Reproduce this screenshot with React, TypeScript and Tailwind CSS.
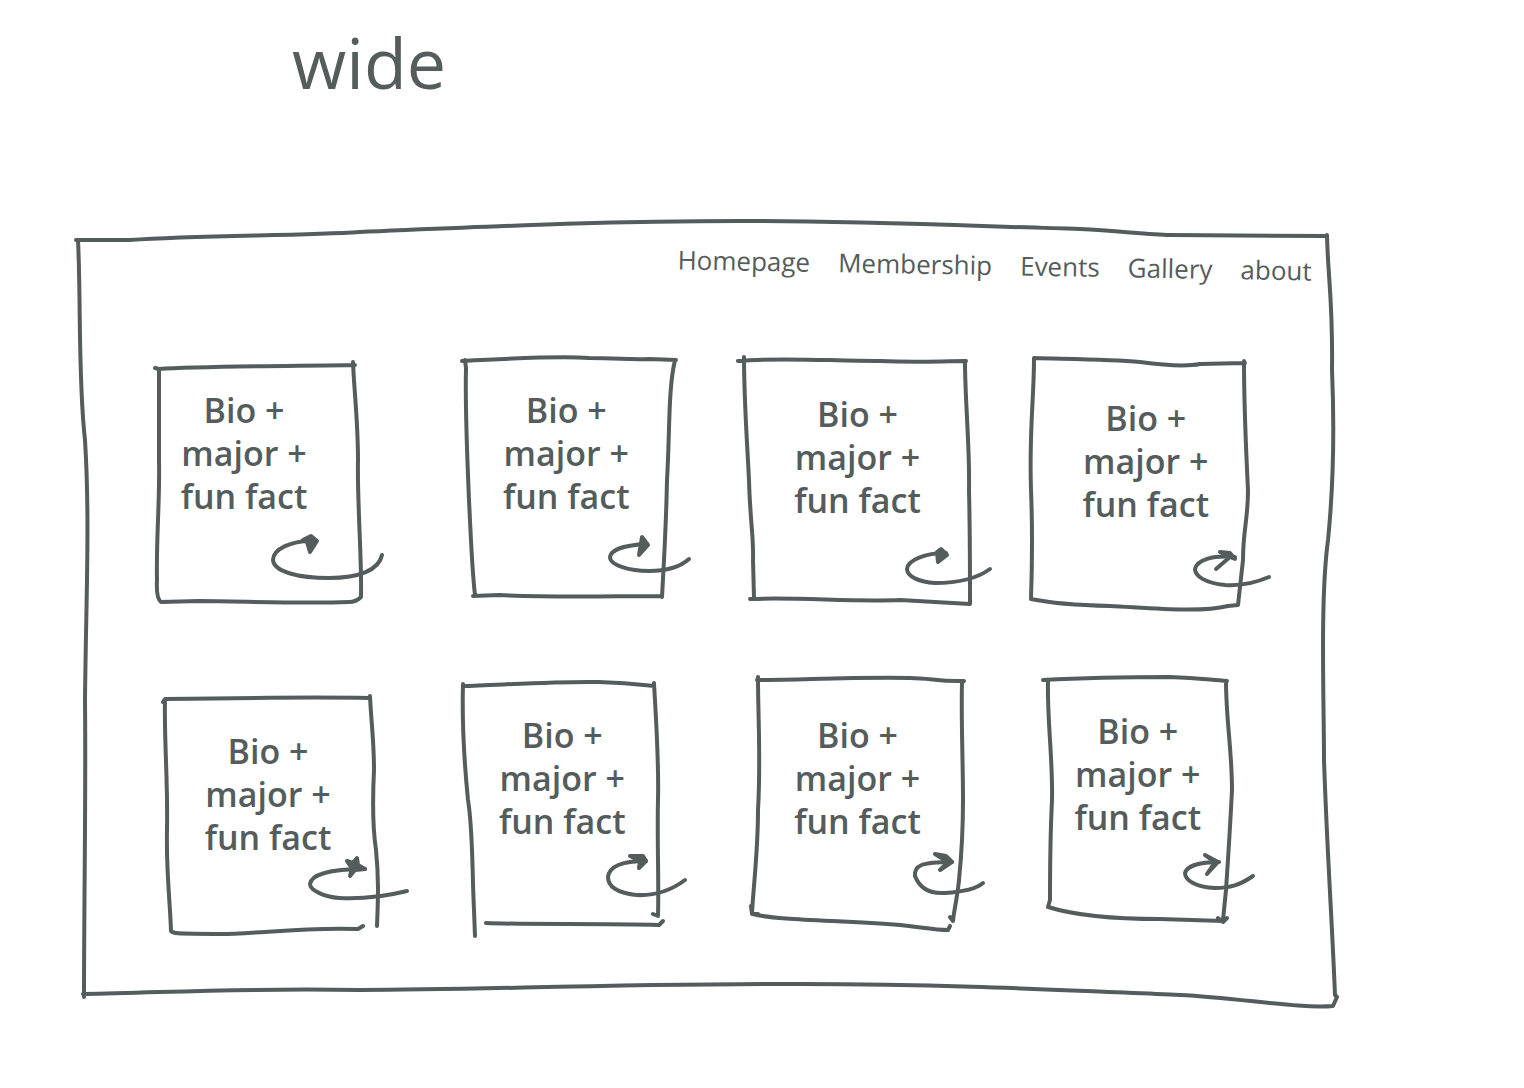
type Member = {
  name: string;
  pad: string;
  view: string;
  outline: string;
  arrow: string;
  head: string;
};

const links = ['Homepage', 'Membership', 'Events', 'Gallery', 'about'];

const members: Member[] = [
  {
    name: 'Member 1',
    pad: 'pl-4 pt-8',
    view: '157 357 240 260',
    outline:
      'M156 368L160 369C200 366 300 366 356 365M354 362C355 390 359 420 359 460C358 500 363 560 362 597Q357 602 350 602C300 604 240 601 200 601L162 602Q157 598 158 580C157 540 161 500 160 460L160 369',
    arrow: 'M383 555C380 570 360 578 330 578C300 578 275 572 274 560C274 549 292 541 312 541',
    head: 'M304 540L312 536L318 541L311 552L308 542Z',
  },
  {
    name: 'Member 2',
    pad: 'pl-8 pt-8',
    view: '463 357 240 260',
    outline:
      'M463 361C500 359 560 356 590 358C620 358 630 360 650 359L677 360M676 360C669 390 671 430 668 480C667 530 665 560 663 597M474 596L500 595C560 598 610 596 663 596M466 360L467 368C466 410 468 450 470 500C472 540 473 570 476 595',
    arrow: 'M690 559C680 568 665 571 650 571C630 571 612 565 611 558C611 550 625 545 648 544',
    head: 'M643 537L640 555L649 545Z',
  },
  {
    name: 'Member 3',
    pad: 'pl-12 pt-9',
    view: '738 357 240 260',
    outline:
      'M738 361C780 357 830 361 880 361C920 363 940 361 966 361M965 362C965 400 970 450 969 490C970 530 970 570 970 604M750 599C800 597 850 602 900 600L970 604M744 357C744 400 747 440 749 480C750 520 754 540 753 560L754 598',
    arrow: 'M990 569C975 580 955 583 935 583C920 582 907 577 907 569C908 560 925 553 946 553',
    head: 'M941 549L947 555L938 562L937 552Z',
  },
  {
    name: 'Member 4',
    pad: 'pl-11 pt-10',
    view: '1030 357 240 260',
    outline:
      'M1034 358C1070 359 1110 359 1140 362C1170 366 1190 366 1200 364L1245 363M1244 361C1244 400 1245 430 1248 490C1248 520 1243 530 1243 560L1238 605L1228 606C1200 613 1150 608 1110 606C1070 605 1050 603 1031 599M1034 358C1034 400 1029 430 1031 490C1033 540 1032 570 1031 599',
    arrow: 'M1269 577C1255 583 1240 586 1225 585C1205 583 1195 576 1195 569C1197 560 1212 555 1235 557',
    head: 'M1220 552L1230 553L1235 559L1230 557L1216 569L1230 557Z',
  },
  {
    name: 'Member 5',
    pad: 'pl-10 pt-13',
    view: '157 678 240 260',
    outline:
      'M164 702L166 699C230 698 310 697 371 698M371 696C372 720 375 740 375 770C373 810 374 830 377 850C380 880 379 900 378 926M364 926L359 929C300 927 260 934 220 934C190 933 175 935 172 931C171 900 167 870 168 830C169 780 165 740 166 700',
    arrow: 'M408 891C380 898 360 899 340 898C325 897 311 890 311 884C312 875 330 869 366 869',
    head: 'M348 861L354 863L358 858L359 865L366 869L356 870L351 876L353 868Z',
  },
  {
    name: 'Member 6',
    pad: 'pl-7 pt-9',
    view: '463 678 240 260',
    outline:
      'M464 686C500 685 560 681 600 682C630 683 645 685 655 686M655 683C657 720 660 760 659 800C658 840 660 880 659 916L654 914M487 923C530 925 600 923 660 925L664 921M464 684C463 720 465 760 469 800C474 830 473 870 475 910L476 936',
    arrow: 'M686 880C670 892 655 896 637 895C620 893 609 887 609 877C610 868 620 861 647 861',
    head: 'M631 856L644 856L647 861L640 868L641 861Z',
  },
  {
    name: 'Member 7',
    pad: 'pl-12 pt-9',
    view: '738 678 240 260',
    outline:
      'M757 680C800 680 850 677 910 678C930 678 940 682 964 681M962 683C961 720 963 760 963 800C963 840 961 860 959 880C957 900 954 910 953 921L950 917M751 906L752 914L758 914M753 914C780 921 840 920 900 925C920 927 935 930 948 930L950 926M758 677C758 720 761 760 758 810C758 850 754 880 752 913',
    arrow: 'M983 883C975 890 960 892 945 893C930 894 920 889 915 876C914 866 920 862 952 862',
    head: 'M935 854L946 856L952 862L940 870L948 862Z',
  },
  {
    name: 'Member 8',
    pad: 'pl-9 pt-8',
    view: '1030 678 240 260',
    outline:
      'M1043 680C1080 678 1130 677 1170 677C1200 678 1210 680 1227 681M1226 681C1226 720 1232 750 1232 790C1230 830 1228 860 1226 890L1223 920M1218 918L1223 922L1227 918M1048 907C1080 917 1130 919 1160 919L1223 921M1048 681C1047 720 1053 760 1052 800C1050 840 1050 870 1050 900L1048 907',
    arrow: 'M1253 876C1240 885 1230 888 1215 888C1195 887 1185 880 1185 873C1187 866 1200 862 1219 862',
    head: 'M1205 855L1218 862L1207 874L1215 862Z',
  },
];

function Frame() {
  return (
    <svg
      aria-hidden="true"
      className="pointer-events-none absolute inset-0 h-full w-full overflow-visible"
      viewBox="76 216 1264 796"
      preserveAspectRatio="none"
      fill="none"
      stroke="currentColor"
      strokeWidth="4"
      strokeLinecap="round"
      strokeLinejoin="round"
    >
      <path
        vectorEffect="non-scaling-stroke"
        d="M76 240L130 240C200 235 300 236 360 232C480 227 600 221 740 221C860 221 970 226 1080 229C1120 231 1150 235 1170 235L1327 236M1327 235C1328 280 1333 300 1332 370C1335 440 1333 490 1328 540C1320 600 1324 700 1324 760C1327 850 1332 920 1335 995L1337 997L1333 1006C1300 1009 1240 998 1180 995C1060 990 950 984 800 984C600 984 480 990 360 990C240 988 180 992 83 994M78 240C81 300 78 380 85 440C90 520 86 600 85 700C86 800 84 900 84 997"
      />
    </svg>
  );
}

function MemberCard({ member }: { member: Member }) {
  return (
    <button type="button" aria-label={`Flip card: ${member.name}`} className={`relative flex h-65 w-60 items-start ${member.pad}`}>
      <svg
        aria-hidden="true"
        className="pointer-events-none absolute top-0 left-0 h-65 w-60 overflow-visible"
        viewBox={member.view}
        fill="none"
        stroke="currentColor"
        strokeWidth="4"
        strokeLinecap="round"
        strokeLinejoin="round"
      >
        <path d={member.outline} />
        <path d={member.arrow} />
        <path d={member.head} fill="currentColor" />
      </svg>
      <span className="w-36 text-center text-[34px] leading-[43px] font-semibold whitespace-nowrap">
        Bio +<br />
        major +<br />
        fun fact
      </span>
    </button>
  );
}

export default function App() {
  return (
    <div className="min-h-screen bg-white pr-46 pb-19 pl-19 font-['Open_Sans',sans-serif] text-[#555c5c]">
      <h1 className="h-54 pt-4 pl-54 text-[70px] leading-[92px] font-normal">wide</h1>
      <main className="relative pb-[74px]">
        <Frame />
        <nav aria-label="Main" className="flex rotate-1 justify-end gap-7 pt-7 pr-7 text-[26px] leading-8">
          {links.map((label) => (
            <a key={label} href={`#${label.toLowerCase()}`}>
              {label}
            </a>
          ))}
        </nav>
        <div className="mt-[81px] mr-17 ml-20 grid grid-cols-[306fr_275fr_292fr_242fr] gap-y-[61px]">
          {members.map((member) => (
            <MemberCard key={member.name} member={member} />
          ))}
        </div>
      </main>
    </div>
  );
}
